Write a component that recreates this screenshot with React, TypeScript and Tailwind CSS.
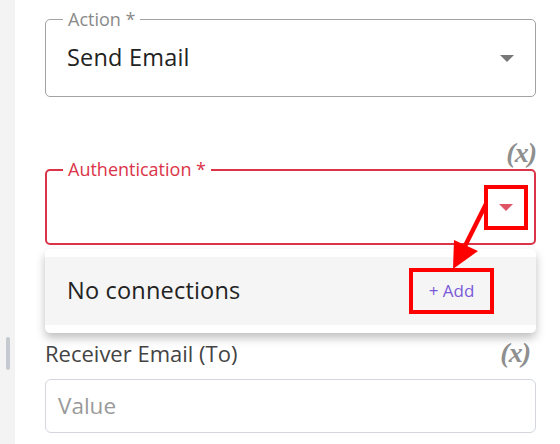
import React from "react";

const font = { fontFamily: '"Open Sans", "Noto Sans", sans-serif' };

function Caret({ color }: { color: string }) {
  return (
    <svg width="14" height="7" viewBox="0 0 14 7">
      <path d="M0 0 L14 0 L7 7 Z" fill={color} />
    </svg>
  );
}

function VarIcon() {
  return (
    <span
      className="text-[28px] leading-none italic font-bold text-[#8f8f8f] tracking-[-1px]"
      style={{ fontFamily: '"Liberation Serif", "DejaVu Serif", serif' }}
    >
      (x)
    </span>
  );
}

export default function App() {
  return (
    <div className="relative flex w-[560px] h-[444px] overflow-hidden bg-white" style={font}>
      {/* left strip with scrollbar */}
      <div className="w-[15px] h-full bg-[#f3f3f3] pt-[337px] pl-[6px] shrink-0">
        <div className="w-[4px] h-[33px] rounded-full bg-[#c5cad1]" />
      </div>

      {/* main column */}
      <div className="flex flex-col w-[491px] ml-[30px]">
        {/* Action */}
        <div className="relative mt-[19px] h-[78px] border border-[#a3a3a3] rounded-[5px] flex items-center justify-between pl-[21px] pr-[21px]">
          <span className="absolute -top-[13px] left-[17px] bg-white px-[5px] text-[18px] leading-[24px] text-[#8a8a8a]">
            Action *
          </span>
          <span className="text-[23.5px] text-[#222] tracking-[0.2px]">Send Email</span>
          <Caret color="#777" />
        </div>

        {/* (x) */}
        <div className="flex justify-end items-center mt-[40px] h-[32px]">
          <VarIcon />
        </div>

        {/* Authentication */}
        <div className="relative h-[76px] border-2 border-[#db3448] rounded-[5px] flex items-center justify-end pr-[6px]">
          <span className="absolute -top-[14px] left-[16px] bg-white px-[5px] text-[18px] leading-[24px] text-[#db3448]">
            Authentication *
          </span>
          <div className="w-[44px] h-[45px] border-4 border-[#ff0000] flex items-center justify-center">
            <Caret color="#df5566" />
          </div>
        </div>

        {/* spacer hidden under menu */}
        <div className="h-[94px]" />

        {/* Receiver Email */}
        <div className="flex items-center justify-between h-[28px] pr-[6px]">
          <span className="text-[22px] text-[#444]">Receiver Email (To)</span>
          <VarIcon />
        </div>

        <div className="mt-[12px] h-[54px] border border-[#d3d7dd] rounded-[6px] flex items-center pl-[12px]">
          <span className="text-[22.5px] text-[#9a9a9a]">Value</span>
        </div>
      </div>

      {/* dropdown menu overlay */}
      <div className="absolute left-[45px] top-[249px] w-[491px] bg-white rounded-[5px] py-[8px] shadow-[0_5px_10px_rgba(0,0,0,0.25)]">
        <div className="h-[68px] bg-[#f5f5f5] flex items-center justify-between pl-[22px] pr-[42px]">
          <span className="text-[23.5px] text-[#222] tracking-[0.2px]">No connections</span>
          <div className="w-[85px] h-[46px] border-4 border-[#ff0000] flex items-center justify-center">
            <span className="text-[17px] text-[#7b5ad9]">+ Add</span>
          </div>
        </div>
      </div>

      {/* annotation arrow */}
      <svg className="absolute inset-0 pointer-events-none" width="560" height="444">
        <line x1="486" y1="204" x2="465" y2="246" stroke="#ff0000" strokeWidth="4.5" />
        <path d="M453 269 L454 240 L478 251 Z" fill="#ff0000" />
      </svg>
    </div>
  );
}
